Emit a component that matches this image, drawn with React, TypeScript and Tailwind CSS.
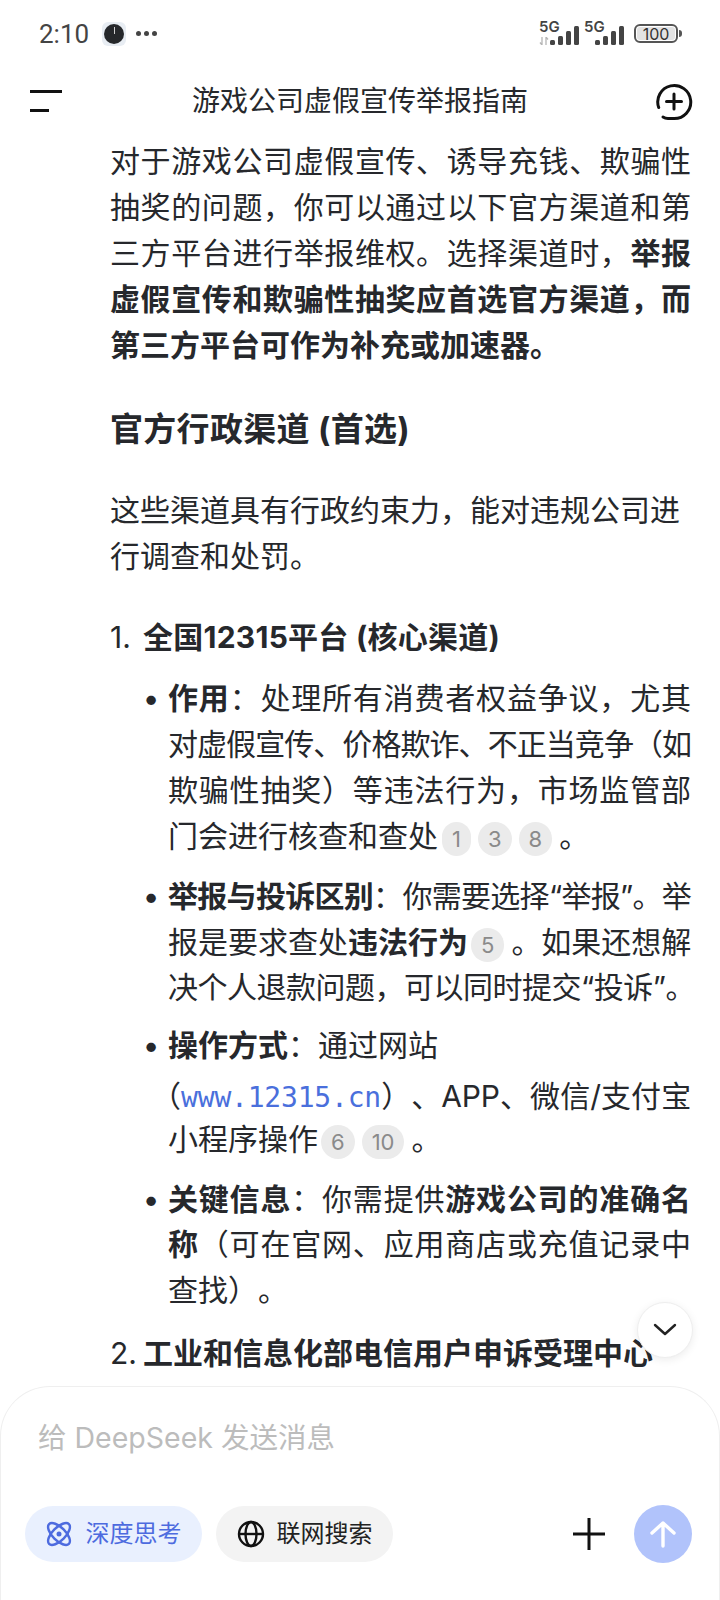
function Badge({ n }: { n: string }) {
  return (
    <span className="-my-[6px] mr-[7px] inline-flex h-[34px] items-center justify-center rounded-full bg-[#ebebeb] px-[10px] align-baseline text-[22px] font-normal leading-none tracking-normal text-[#8a8a8a]">
      {n}
    </span>
  );
}

// one rendered line; stretched to the column edge unless it is the last of its block
function Line({ children, last, className }: { children: React.ReactNode; last?: boolean; className?: string }) {
  return (
    <span className={`block whitespace-nowrap ${last ? "" : "[text-align-last:justify]"} ${className ?? ""}`}>
      {children}
    </span>
  );
}

function ClockIcon() {
  return (
    <div className="ml-[1px] flex size-[24px] items-center justify-center rounded-[6px] bg-[#e8edf3]">
      <div className="relative size-[20px] rounded-full bg-[#26282b]">
        <div className="absolute left-[9.5px] top-[3px] h-[7px] w-px bg-[#cfcfcf]" />
      </div>
    </div>
  );
}

function Signal({ showArrows }: { showArrows?: boolean }) {
  return (
    <div className="relative h-[22px] w-[40px]">
      <span className="absolute left-0 top-[-4px] text-[15px] font-semibold leading-[16px] text-[#444]">5G</span>
      {showArrows && (
        <svg className="absolute bottom-0 left-0" width="10" height="8" viewBox="0 0 10 8">
          <path d="M3 0v8M1 5.5L3 8M7 0v8M9 2.5L7 0" stroke="#b5b5b5" strokeWidth="1.3" fill="none" />
        </svg>
      )}
      <svg className="absolute bottom-0 right-0" width="29" height="19" viewBox="0 0 29 19">
        <rect x="0" y="14" width="5" height="5" rx="1.5" fill="#444" />
        <rect x="8" y="10" width="5" height="9" rx="1.5" fill="#444" />
        <rect x="16" y="5" width="5" height="14" rx="1.5" fill="#444" />
        <rect x="24" y="0" width="5" height="19" rx="1.5" fill="#444" />
      </svg>
    </div>
  );
}

function StatusBar() {
  return (
    <div className="flex h-[66px] shrink-0 items-center pl-[39px] pr-[38px] pt-[1px] text-[#444]">
      <span className="w-[62px] font-['Roboto',sans-serif] text-[26px] leading-none">2:10</span>
      <ClockIcon />
      <div className="ml-[10px] flex gap-[3px]">
        <div className="size-[5px] rounded-full bg-[#444]" />
        <div className="size-[5px] rounded-full bg-[#444]" />
        <div className="size-[5px] rounded-full bg-[#444]" />
      </div>
      <div className="ml-auto flex items-center gap-[5px]">
        <Signal showArrows />
        <Signal />
        <div className="ml-[5px] flex items-center">
          <div className="flex h-[19px] w-[44px] items-center justify-center rounded-[6px] border-2 border-[#555] p-[1px]">
            <div className="flex size-full items-center justify-center rounded-[3px] bg-[#e3e3e3] text-[16px] leading-none text-[#333]">100</div>
          </div>
          <div className="ml-[1px] h-[7px] w-[3px] rounded-r-full bg-[#555]" />
        </div>
      </div>
    </div>
  );
}

function Header() {
  return (
    <div className="relative flex h-[70px] shrink-0 items-center justify-center">
      <div className="absolute left-[30px] top-[24px] flex flex-col gap-[16px]">
        <div className="h-[3px] w-[32px] bg-[#111]" />
        <div className="h-[3px] w-[19px] bg-[#111]" />
      </div>
      <span className="text-[28px] leading-none text-[#26282c]">游戏公司虚假宣传举报指南</span>
      <svg className="absolute left-[655px] top-[17px]" width="38" height="38" viewBox="0 0 38 38" fill="none">
        <path d="M3.7 24.5A16.5 16.5 0 1 1 19 35.5H13C11 35.5 9.5 35 8 34" stroke="#111" strokeWidth="3" strokeLinecap="round" />
        <path d="M19 11V26M11.5 18.5H26.5" stroke="#111" strokeWidth="3" strokeLinecap="round" />
      </svg>
    </div>
  );
}

function Bullet({ children, className }: { children: React.ReactNode; className?: string }) {
  return (
    <li className={`flex ${className ?? ""}`}>
      <span className="w-[58px] pl-[34px] font-bold">•</span>
      <div className="w-[523px]">{children}</div>
    </li>
  );
}

function Article() {
  return (
    <div className="min-h-0 flex-1 overflow-hidden pl-[110px] pr-[29px] text-[30px] leading-[46px] text-[#26282c] [text-spacing-trim:space-all]">
      <p className="pt-[2px]">
        <Line>对于游戏公司虚假宣传、诱导充钱、欺骗性</Line>
        <Line>抽奖的问题，你可以通过以下官方渠道和第</Line>
        <Line>三方平台进行举报维权。选择渠道时，<b>举报</b></Line>
        <Line><b>虚假宣传和欺骗性抽奖应首选官方渠道，而</b></Line>
        <Line last><b>第三方平台可作为补充或加速器。</b></Line>
      </p>
      <h2 className="mt-[38px] text-[33px] font-bold leading-[46px] tracking-[0.3px]">官方行政渠道 (首选)</h2>
      <p className="mt-[35px]">
        <Line last>这些渠道具有行政约束力，能对违规公司进</Line>
        <Line last>行调查和处罚。</Line>
      </p>
      <div className="mt-[35px] flex">
        <span className="w-[33px]">1.</span>
        <b className="tracking-[0.25px]">全国12315平台 (核心渠道)</b>
      </div>
      <ul className="mt-[15px]">
        <Bullet>
          <Line><b>作用</b>：处理所有消费者权益争议，尤其</Line>
          <Line className="tracking-[-1px]">对虚假宣传、价格欺诈、不正当竞争（如</Line>
          <Line>欺骗性抽奖）等违法行为，市场监管部</Line>
          <Line last>门会进行核查和查处<span className="ml-[4px]" /><Badge n="1" /><Badge n="3" /><Badge n="8" />。</Line>
        </Bullet>
        <Bullet className="mt-[14px]">
          <Line className="tracking-[-0.7px]"><b>举报与投诉区别</b>：你需要选择“举报”。举</Line>
          <Line>报是要求查处<b>违法行为</b><span className="ml-[3px]" /><Badge n="5" />。如果还想解</Line>
          <Line className="-mt-[1px] tracking-[-0.5px]">决个人退款问题，可以同时提交“投诉”。</Line>
        </Bullet>
        <Bullet className="mt-[12px]">
          <Line last><b>操作方式</b>：通过网站</Line>
          <Line className="-mb-[5px] mt-[5px] tracking-[-0.2px]"><span className="ml-[-17px]">（</span><span className="font-['DejaVu_Sans_Mono',monospace] text-[28px] text-[#4a6fdc]">www.12315.cn</span>）、APP、微信/支付宝</Line>
          <Line last>小程序操作<span className="ml-[3px]" /><Badge n="6" /><Badge n="10" />。</Line>
        </Bullet>
        <Bullet className="mt-[14px]">
          <Line><b>关键信息</b>：你需提供<b>游戏公司的准确名</b></Line>
          <Line className="-mt-[1px]"><b>称</b>（可在官网、应用商店或充值记录中</Line>
          <Line last>查找）。</Line>
        </Bullet>
      </ul>
      <div className="mt-[17px] flex whitespace-nowrap">
        <span className="w-[33px]">2.</span>
        <b>
          工业和信息化部电信用户申诉受理中心
          <span className="mt-[5px] block">(工信部)</span>
        </b>
      </div>
    </div>
  );
}

function Composer() {
  return (
    <div className="h-[214px] shrink-0 rounded-t-[50px] border border-b-0 border-[#efefef] bg-white pl-[24px] pr-[27px] pt-[29px] shadow-[0_-3px_6px_rgba(255,255,255,0.9)]">
      <div className="pl-[13px] text-[28.5px] leading-[44px] text-[#bcbcbc]">给 DeepSeek 发送消息</div>
      <div className="mt-[45px] flex items-center">
        <div className="flex h-[56px] w-[177px] items-center justify-center gap-[14px] rounded-full bg-[#e9f0fe] text-[24px] text-[#4d6bdf]">
          <svg width="26" height="26" viewBox="0 0 26 26" fill="none" stroke="#4d6bdf" strokeWidth="2.4">
            <ellipse cx="13" cy="13" rx="6.5" ry="14" transform="rotate(45 13 13)" />
            <ellipse cx="13" cy="13" rx="6.5" ry="14" transform="rotate(-45 13 13)" />
            <circle cx="13" cy="13" r="2.5" fill="#4d6bdf" stroke="none" />
          </svg>
          <span>深度思考</span>
        </div>
        <div className="ml-[14px] flex h-[56px] w-[177px] items-center justify-center gap-[12px] rounded-full bg-[#f3f3f3] text-[24px] text-[#222]">
          <svg width="28" height="28" viewBox="0 0 28 28" fill="none" stroke="#111" strokeWidth="2.4">
            <circle cx="14" cy="14" r="12" />
            <ellipse cx="14" cy="14" rx="5.5" ry="12" />
            <path d="M2 14H26" />
          </svg>
          <span>联网搜索</span>
        </div>
        <svg className="ml-auto" width="32" height="32" viewBox="0 0 32 32" fill="none" stroke="#111" strokeWidth="3">
          <path d="M16 0V32M0 16H32" />
        </svg>
        <div className="ml-[29px] flex size-[58px] items-center justify-center rounded-full bg-[#b1c3fb]">
          <svg width="28" height="28" viewBox="0 0 28 28" fill="none" stroke="#fff" strokeWidth="3.4" strokeLinecap="round" strokeLinejoin="round">
            <path d="M14 26V3M3 13L14 3L25 13" />
          </svg>
        </div>
      </div>
    </div>
  );
}

export default function App() {
  return (
    <div className="relative flex h-[1600px] w-[720px] flex-col overflow-hidden bg-white font-['Inter','Noto_Sans_CJK_SC',sans-serif]">
      <StatusBar />
      <Header />
      <Article />
      <Composer />
      <div className="absolute left-[637px] top-[1302px] flex size-[56px] items-center justify-center rounded-full border border-[#eeeeee] bg-white shadow-[0_2px_8px_rgba(0,0,0,0.08)]">
        <svg width="24" height="14" viewBox="0 0 24 14" fill="none" stroke="#222" strokeWidth="2.4" strokeLinecap="round" strokeLinejoin="round">
          <path d="M2 2L12 11L22 2" />
        </svg>
      </div>
    </div>
  );
}
